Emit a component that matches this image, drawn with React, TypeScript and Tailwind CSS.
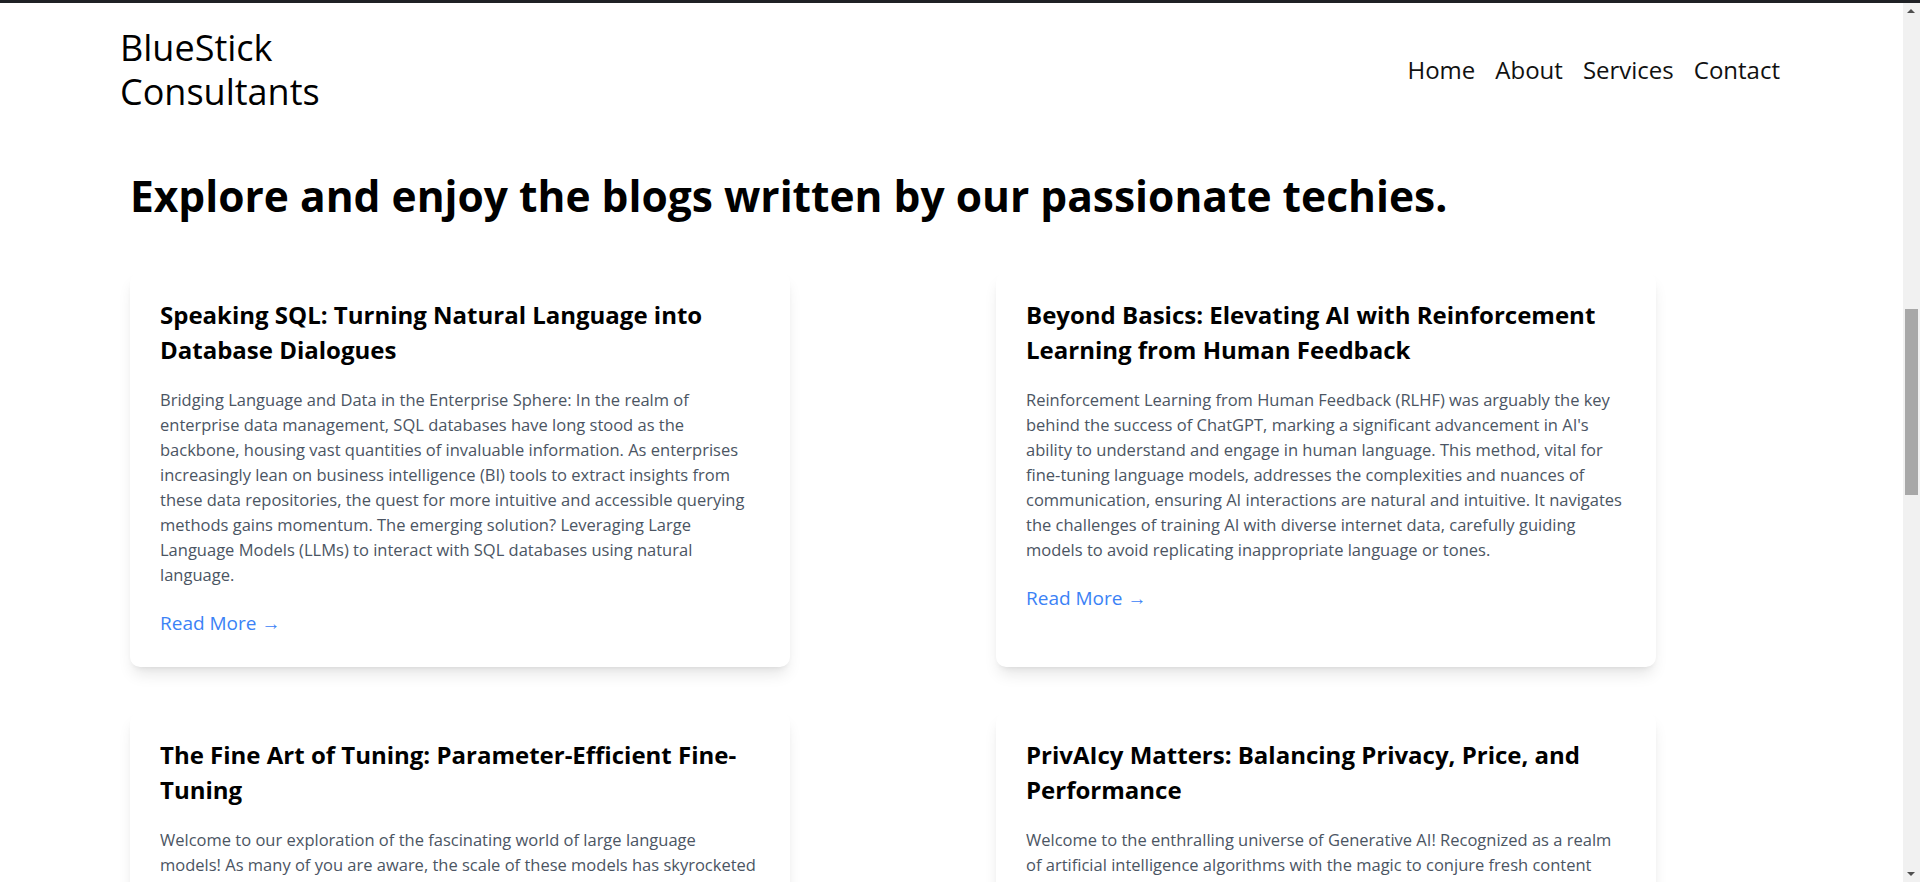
import type { FC } from "react";

type Post = {
  title: string;
  excerpt: string;
};

const posts: Post[] = [
  {
    title: "Speaking SQL: Turning Natural Language into Database Dialogues",
    excerpt:
      "Bridging Language and Data in the Enterprise Sphere: In the realm of enterprise data management, SQL databases have long stood as the backbone, housing vast quantities of invaluable information. As enterprises increasingly lean on business intelligence (BI) tools to extract insights from these data repositories, the quest for more intuitive and accessible querying methods gains momentum. The emerging solution? Leveraging Large Language Models (LLMs) to interact with SQL databases using natural language.",
  },
  {
    title: "Beyond Basics: Elevating AI with Reinforcement Learning from Human Feedback",
    excerpt:
      "Reinforcement Learning from Human Feedback (RLHF) was arguably the key behind the success of ChatGPT, marking a significant advancement in AI's ability to understand and engage in human language. This method, vital for fine-tuning language models, addresses the complexities and nuances of communication, ensuring AI interactions are natural and intuitive. It navigates the challenges of training AI with diverse internet data, carefully guiding models to avoid replicating inappropriate language or tones.",
  },
  {
    title: "The Fine Art of Tuning: Parameter-Efficient Fine-Tuning",
    excerpt:
      "Welcome to our exploration of the fascinating world of large language models! As many of you are aware, the scale of these models has skyrocketed in recent years, and with it the cost of adapting them to new tasks. Parameter-efficient fine-tuning offers a way to tailor these giants without retraining every weight.",
  },
  {
    title: "PrivAIcy Matters: Balancing Privacy, Price, and Performance",
    excerpt:
      "Welcome to the enthralling universe of Generative AI! Recognized as a realm of artificial intelligence algorithms with the magic to conjure fresh content from text and images to code and music, it also raises real questions about privacy, cost and performance for every business.",
  },
];

const font = { fontFamily: '"Open Sans", "Noto Sans", Arial, sans-serif' };

const BlogCard: FC<{ post: Post }> = ({ post }) => (
  <div className="bg-white rounded-[10px] shadow-lg px-[30px] pt-[25px] pb-[31px] flex flex-col">
    <h2 className="text-[24px] leading-[35px] font-bold text-black">{post.title}</h2>
    <p className="mt-5 text-[16.5px] leading-[25px] text-[#4b5563]">{post.excerpt}</p>
    <a href="#" className="mt-6 text-[19px] leading-[25px] text-[#3b82f6]">
      Read More →
    </a>
  </div>
);

const Scrollbar: FC = () => (
  <div className="w-[17px] shrink-0 bg-[#f1f1f1] relative">
    <div className="absolute left-[4px] top-[6px] w-0 h-0 border-l-[4px] border-r-[4px] border-b-[4px] border-l-transparent border-r-transparent border-b-[#505050]" />
    <div className="absolute left-[2px] right-[2px] top-[306px] h-[186px] bg-[#a8a8a8]" />
    <div className="absolute left-[4px] bottom-[6px] w-0 h-0 border-l-[4px] border-r-[4px] border-t-[4px] border-l-transparent border-r-transparent border-t-[#505050]" />
  </div>
);

const App: FC = () => {
  return (
    <div className="h-screen overflow-hidden flex flex-col bg-white" style={font}>
      <div className="h-[3px] bg-[#1f2125] shrink-0" />
      <div className="flex flex-1 min-h-0">
        <main className="flex-1 overflow-hidden">
          <header className="flex items-center justify-between pl-[120px] pr-[123px] pt-[23px] pb-[26px]">
            <a href="#" className="text-[36px] leading-[44px] text-black w-[220px]">
              BlueStick Consultants
            </a>
            <nav className="flex items-center gap-[20px] text-[24px] text-[#111]">
              <a href="#">Home</a>
              <a href="#">About</a>
              <a href="#">Services</a>
              <a href="#">Contact</a>
            </nav>
          </header>
          <section className="pl-[130px] pt-[35px]">
            <h1 className="text-[42.5px] leading-[42px] font-bold text-black">
              Explore and enjoy the blogs written by our passionate techies.
            </h1>
            <div className="mt-[55px] grid grid-cols-[660px_660px] gap-x-[206px] gap-y-[45px]">
              {posts.map((post) => (
                <BlogCard key={post.title} post={post} />
              ))}
            </div>
          </section>
        </main>
        <Scrollbar />
      </div>
    </div>
  );
};

export default App;
